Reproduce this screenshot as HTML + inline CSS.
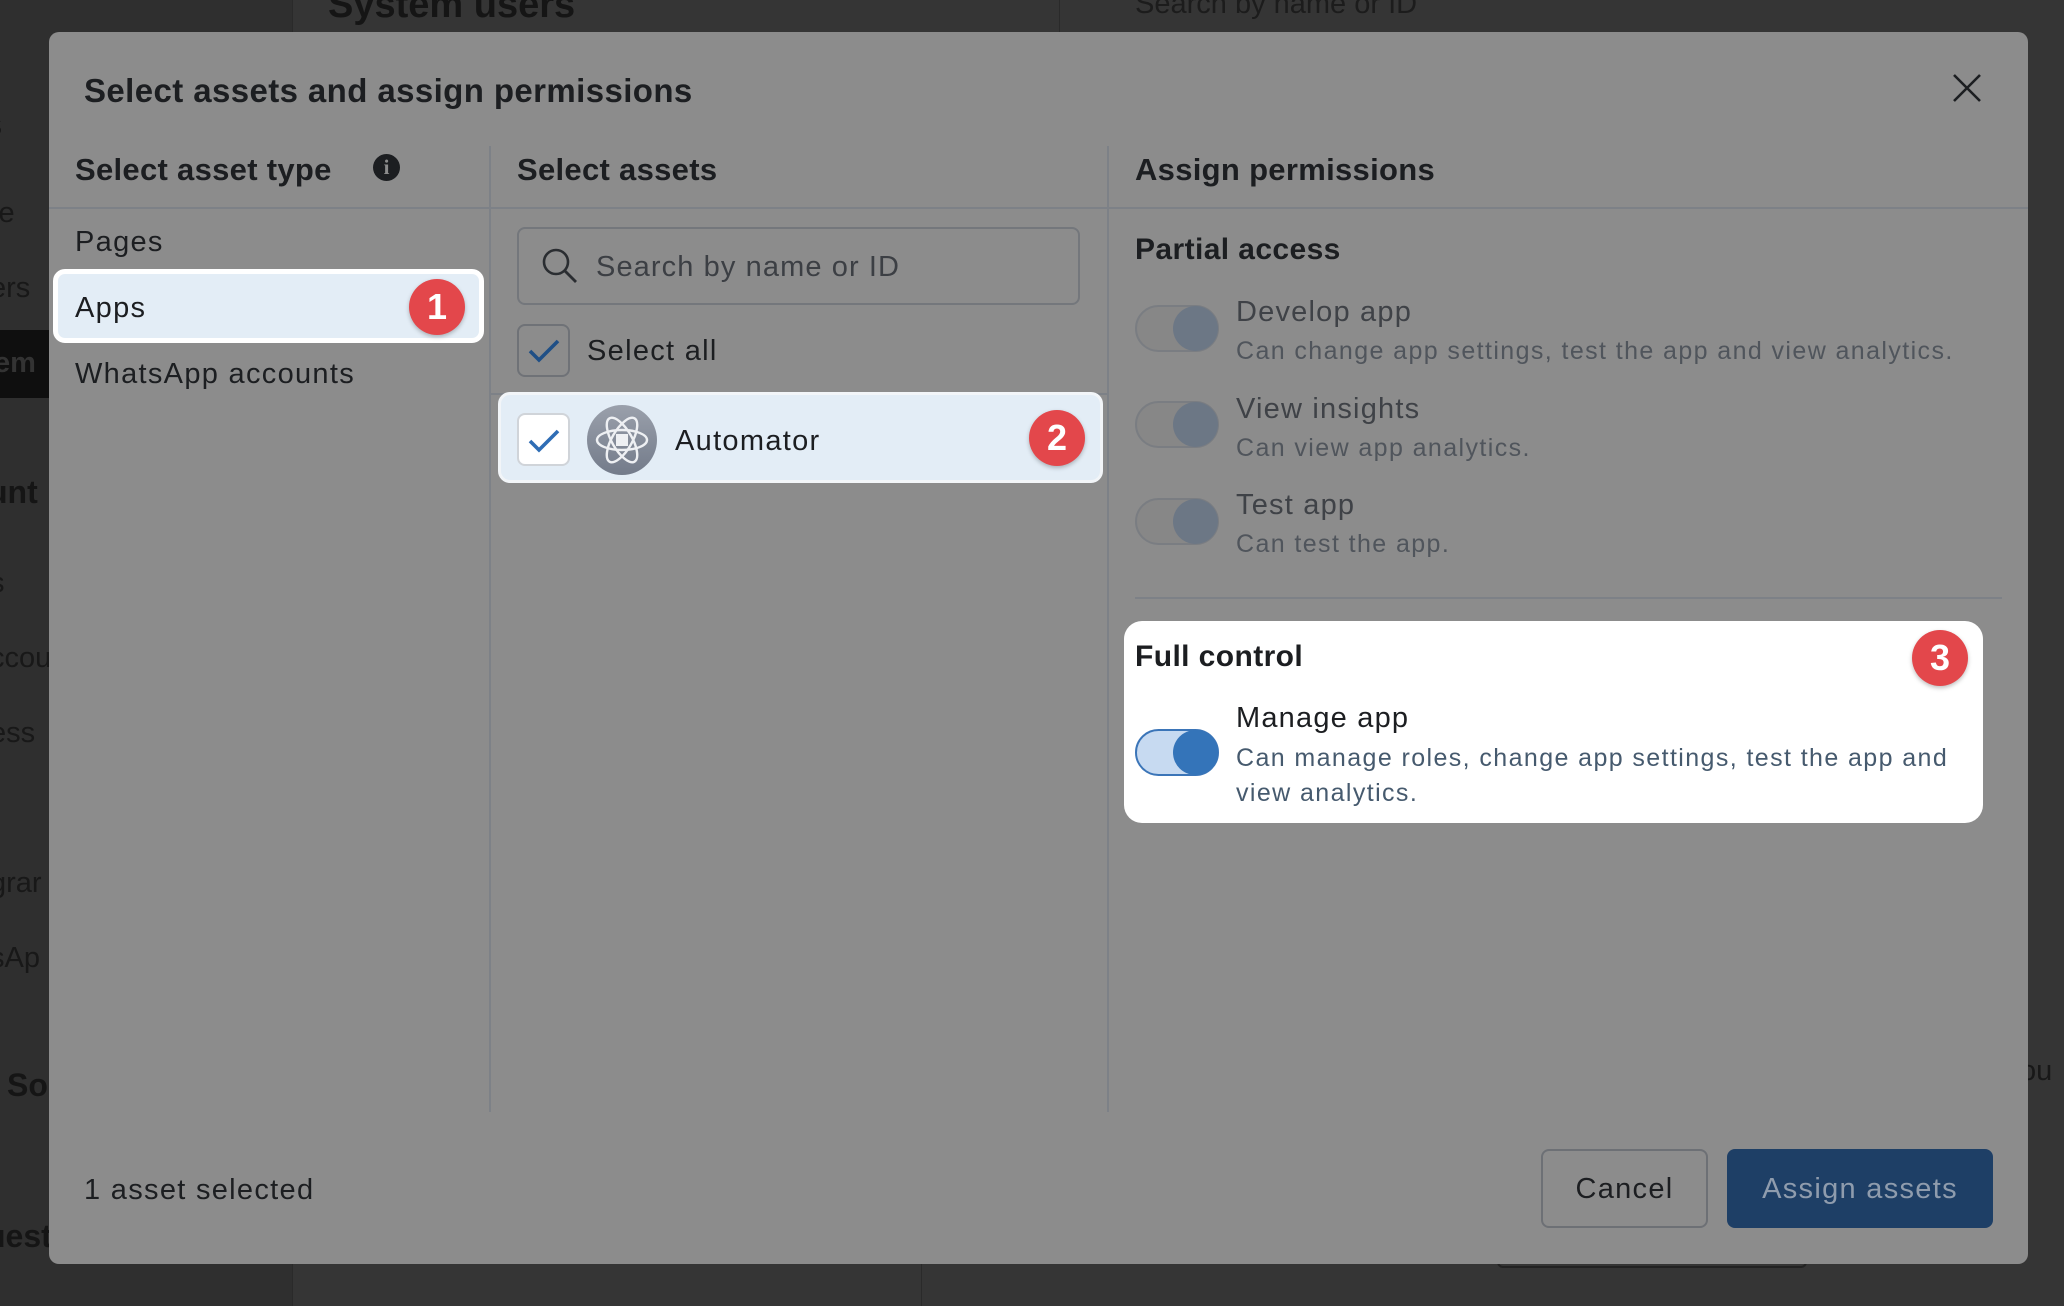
<!DOCTYPE html>
<html><head><meta charset="utf-8"><style>
*{box-sizing:border-box;margin:0;padding:0}
body{width:2064px;height:1306px;background:#353535;position:relative;overflow:hidden;font-family:"Liberation Sans",sans-serif;color:#1c1e21}
.a{position:absolute;white-space:nowrap}
.bd{font-weight:bold}
.r{letter-spacing:1.3px}
.tog{position:absolute;left:1135px;width:84px;height:47px;border-radius:24px;border:2px solid #7a7d82;background:#878787}
.tog i{position:absolute;right:-1px;top:-1px;width:45px;height:45px;border-radius:50%;background:#6c7785}
.t1{font-size:29px;color:#3f4247;letter-spacing:1.2px}
.t2{font-size:25px;color:#50555c;letter-spacing:1.4px}
.badge{position:absolute;width:56px;height:56px;border-radius:50%;background:#e3474b;color:#fff;font-weight:bold;font-size:36px;text-align:center;line-height:56px;box-shadow:0 2px 4px rgba(0,0,0,.25)}
.cb{position:absolute;width:53px;height:53px;border-radius:8px;border:2px solid #6f7277}
</style></head><body>
<div class="a" style="left:0;top:0;width:292px;height:1306px;background:#2f2f2f"></div>
<div class="a" style="left:292px;top:0;width:1px;height:1306px;background:#2a2a2a"></div>
<div class="a" style="left:1059px;top:0;width:1px;height:32px;background:#2a2a2a"></div>
<div class="a bd" style="left:328px;top:-16px;font-size:38px;color:#151515">System users</div>
<div class="a" style="left:1135px;top:-12px;font-size:29px;color:#1c1c1c">Search by name or ID</div>
<div class="a" style="left:0;top:330px;width:49px;height:68px;background:#0f0f0f"></div>
<div class="a" style="left:-14px;top:106px;font-size:32px;color:#151515" >s</div>
<div class="a" style="left:-8px;top:197px;font-size:29px;color:#181818">le</div>
<div class="a" style="left:-10px;top:272px;font-size:29px;color:#181818">ers</div>
<div class="a bd" style="left:-6px;top:347px;font-size:29px;color:#333">em</div>
<div class="a bd" style="left:-12px;top:474px;font-size:32px;color:#151515">unt</div>
<div class="a" style="left:-10px;top:567px;font-size:29px;color:#181818">s</div>
<div class="a" style="left:-10px;top:642px;font-size:29px;color:#181818">ccou</div>
<div class="a" style="left:-10px;top:717px;font-size:29px;color:#181818">ess</div>
<div class="a" style="left:-10px;top:867px;font-size:29px;color:#181818">grar</div>
<div class="a" style="left:-10px;top:942px;font-size:29px;color:#181818">sAp</div>
<div class="a bd" style="left:7px;top:1067px;font-size:32px;color:#151515">So</div>
<div class="a bd" style="left:-14px;top:1218px;font-size:32px;color:#151515">uest</div>
<div class="a" style="left:2020px;top:1055px;font-size:29px;color:#181818">ou</div>
<div class="a" style="left:921px;top:1264px;width:1px;height:42px;background:#2a2a2a"></div>
<div class="a" style="left:1497px;top:1254px;width:310px;height:14px;border:2px solid #222;border-top:none;border-radius:0 0 6px 6px"></div>

<div class="a" style="left:49px;top:32px;width:1979px;height:1232px;background:#8c8c8c;border-radius:10px"></div>
<div class="a bd" style="left:84px;top:72px;font-size:33px;letter-spacing:0.4px">Select assets and assign permissions</div>
<svg class="a" style="left:1952px;top:73px" width="30" height="30" viewBox="0 0 30 30"><path d="M2 2L28 28M28 2L2 28" stroke="#1c1e21" stroke-width="2.6"/></svg>

<div class="a" style="left:49px;top:207px;width:1979px;height:2px;background:#7d8187"></div>
<div class="a" style="left:489px;top:146px;width:2px;height:966px;background:#7d8187"></div>
<div class="a" style="left:1107px;top:146px;width:2px;height:966px;background:#7d8187"></div>

<div class="a bd" style="left:75px;top:152px;font-size:31px;letter-spacing:0.3px">Select asset type</div>
<div class="a" style="left:373px;top:154px;width:27px;height:27px;border-radius:50%;background:#1c1e21;color:#8c8c8c;font-weight:bold;font-size:21px;text-align:center;line-height:27px;font-family:'Liberation Serif',serif">i</div>
<div class="a bd" style="left:517px;top:152px;font-size:31px;letter-spacing:0.3px">Select assets</div>
<div class="a bd" style="left:1135px;top:152px;font-size:31px;letter-spacing:0.3px">Assign permissions</div>

<div class="a r" style="left:75px;top:226px;font-size:29px">Pages</div>
<div class="a" style="left:53px;top:269px;width:431px;height:74px;background:#e3edf6;border:5px solid #fff;border-radius:12px"></div>
<div class="a r" style="left:75px;top:292px;font-size:29px">Apps</div>
<div class="badge" style="left:409px;top:279px">1</div>
<div class="a r" style="left:75px;top:358px;font-size:29px">WhatsApp accounts</div>

<div class="a" style="left:517px;top:227px;width:563px;height:78px;border:2px solid #74777c;border-radius:8px"></div>
<svg class="a" style="left:541px;top:247px" width="38" height="38" viewBox="0 0 38 38"><circle cx="15" cy="15" r="12" fill="none" stroke="#2a2d31" stroke-width="2.6"/><path d="M24 24L35 35" stroke="#2a2d31" stroke-width="2.8"/></svg>
<div class="a" style="left:596px;top:251px;font-size:29px;color:#3c3f44;letter-spacing:1.1px">Search by name or ID</div>
<div class="cb" style="left:517px;top:324px"></div>
<svg class="a" style="left:527px;top:337px" width="34" height="28" viewBox="0 0 34 28"><path d="M3 14L12 23L31 4" fill="none" stroke="#1f4f86" stroke-width="3.6"/></svg>
<div class="a r" style="left:587px;top:335px;font-size:29px">Select all</div>
<div class="a" style="left:491px;top:393px;width:616px;height:2px;background:#7d8187"></div>
<div class="a" style="left:498px;top:392px;width:605px;height:91px;background:#e3edf6;border-radius:12px;border:3px solid #f2f5f8"></div>
<div class="cb" style="left:517px;top:413px;background:#fff;border-color:#d0d4d9"></div>
<svg class="a" style="left:527px;top:427px" width="34" height="28" viewBox="0 0 34 28"><path d="M3 14L12 23L31 4" fill="none" stroke="#2f6db5" stroke-width="3.6"/></svg>
<svg class="a" style="left:587px;top:405px" width="70" height="70" viewBox="0 0 70 70"><defs><linearGradient id="g" x1="0" y1="0" x2="0" y2="1"><stop offset="0" stop-color="#9aa0ab"/><stop offset="1" stop-color="#737b8a"/></linearGradient></defs><circle cx="35" cy="35" r="35" fill="url(#g)"/><g fill="none" stroke="#eef0f3" stroke-width="2.4"><ellipse cx="35" cy="35" rx="25" ry="10"/><ellipse cx="35" cy="35" rx="25" ry="10" transform="rotate(60 35 35)"/><ellipse cx="35" cy="35" rx="25" ry="10" transform="rotate(-60 35 35)"/></g><rect x="29" y="29" width="12" height="12" fill="#eef0f3"/></svg>
<div class="a r" style="left:675px;top:425px;font-size:29px">Automator</div>
<div class="badge" style="left:1029px;top:410px">2</div>

<div class="a bd" style="left:1135px;top:233px;font-size:30px;letter-spacing:0.4px">Partial access</div>
<div class="tog" style="top:305px"><i></i></div>
<div class="a t1" style="left:1236px;top:296px">Develop app</div>
<div class="a t2" style="left:1236px;top:337px">Can change app settings, test the app and view analytics.</div>
<div class="tog" style="top:401px"><i></i></div>
<div class="a t1" style="left:1236px;top:393px">View insights</div>
<div class="a t2" style="left:1236px;top:434px">Can view app analytics.</div>
<div class="tog" style="top:498px"><i></i></div>
<div class="a t1" style="left:1236px;top:489px">Test app</div>
<div class="a t2" style="left:1236px;top:530px">Can test the app.</div>
<div class="a" style="left:1135px;top:597px;width:867px;height:2px;background:#7d8187"></div>

<div class="a" style="left:1124px;top:621px;width:859px;height:202px;background:#fff;border-radius:18px"></div>
<div class="a bd" style="left:1135px;top:640px;font-size:30px;letter-spacing:0.4px">Full control</div>
<div class="badge" style="left:1912px;top:630px">3</div>
<div class="a" style="left:1135px;top:729px;width:84px;height:47px;border-radius:24px;border:2px solid #3b75b8;background:#c7daf1"><i style="position:absolute;right:-1px;top:-1px;width:45px;height:45px;border-radius:50%;background:#3474b9"></i></div>
<div class="a" style="left:1236px;top:702px;font-size:29px;letter-spacing:1.2px">Manage app</div>
<div class="a" style="left:1236px;top:741px;font-size:25px;color:#465a6e;line-height:35px;letter-spacing:1.4px">Can manage roles, change app settings, test the app and<br>view analytics.</div>

<div class="a r" style="left:84px;top:1174px;font-size:29px">1 asset selected</div>
<div class="a r" style="left:1541px;top:1149px;width:167px;height:79px;border:2px solid #6d7075;border-radius:8px;font-size:29px;text-align:center;line-height:77px">Cancel</div>
<div class="a r" style="left:1727px;top:1149px;width:266px;height:79px;background:#1e3f66;border-radius:8px;font-size:29px;text-align:center;line-height:81px;color:#8f9cad">Assign assets</div>
</body></html>
